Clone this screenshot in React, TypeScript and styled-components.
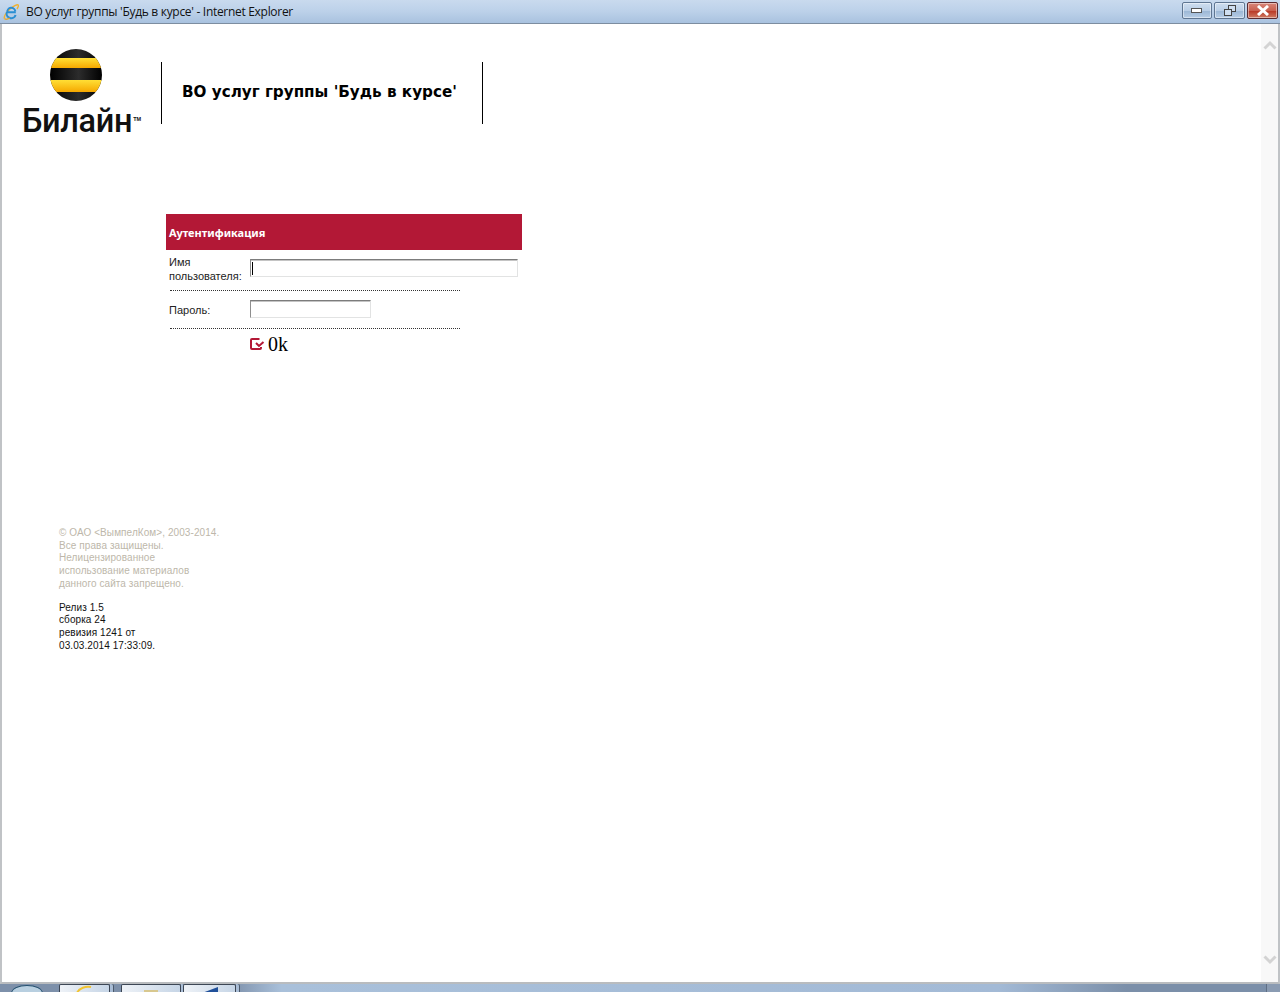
import styled, { createGlobalStyle } from 'styled-components';

const GlobalStyle = createGlobalStyle`
  html, body {
    margin: 0;
    padding: 0;
    height: 100%;
    overflow: hidden;
    background: #fff;
  }
`;

const Screen = styled.div`
  width: 1280px;
  height: 992px;
  display: flex;
  flex-direction: column;
  overflow: hidden;
`;

const TitleBar = styled.div`
  height: 23px;
  padding: 0 2px 0 3px;
  display: flex;
  align-items: center;
  flex-shrink: 0;
  background: linear-gradient(to bottom, #c9daee 0%, #bcd1e9 50%, #a9c2df 100%);
  border-bottom: 1px solid #7d8da0;
`;

const TitleText = styled.span`
  margin-left: 7px;
  padding-bottom: 1px;
  font: 12px 'Open Sans', 'Liberation Sans', sans-serif;
  letter-spacing: -0.3px;
  color: #111;
  white-space: nowrap;
  flex: 1;
`;

const WindowBtn = styled.div<{ $w: number; $close?: boolean }>`
  width: ${(p) => p.$w}px;
  height: 17px;
  margin-left: 2px;
  align-self: flex-start;
  margin-top: 2px;
  box-sizing: border-box;
  display: flex;
  align-items: center;
  justify-content: center;
  border: 1px solid ${(p) => (p.$close ? '#5b2a30' : '#5f7692')};
  border-radius: 2px;
  box-shadow: inset 0 0 0 1px rgba(255, 255, 255, 0.45);
  background: ${(p) =>
    p.$close
      ? 'linear-gradient(to bottom, #d9877a 0%, #c9604f 50%, #b93a28 55%, #cf7a62 100%)'
      : 'linear-gradient(to bottom, #cfdeef 0%, #b9cee6 50%, #9db8d6 55%, #b7cde5 100%)'};
`;

const Body = styled.div`
  flex: 1;
  display: flex;
  min-height: 0;
  border-left: 2px solid #c0c3c6;
  border-right: 2px solid #c0c3c6;
  border-bottom: 2px solid #b9bcbf;
`;

const Page = styled.div`
  flex: 1;
  display: flex;
  flex-direction: column;
  background: #fff;
  padding-top: 25px;
`;

const ScrollBar = styled.div`
  width: 17px;
  background: #f8f8f8;
  display: flex;
  flex-direction: column;
  justify-content: space-between;
  align-items: center;
  padding: 16px 0 17px;
  box-sizing: border-box;
`;

const Header = styled.div`
  display: flex;
  align-items: flex-start;
  padding-left: 20px;
  height: 165px;
`;

const LogoBox = styled.div`
  width: 120px;
  display: flex;
  flex-direction: column;
  align-items: flex-start;
`;

const LogoBall = styled.div`
  margin-left: 28px;
  height: 52px;
`;

const LogoWord = styled.div`
  font: 500 32.5px/34px 'Roboto', 'Liberation Sans', sans-serif;
  letter-spacing: -0.3px;
  color: #111;
  display: flex;
  margin-top: 3px;
  white-space: nowrap;
`;

const LogoTm = styled.span`
  font: 700 5.5px/8px 'Liberation Sans', sans-serif;
  letter-spacing: 0;
  margin-top: 11px;
  margin-left: 1px;
`;

const HeaderTitle = styled.div`
  margin: 13px 0 0 19px;
  width: 322px;
  height: 62px;
  box-sizing: border-box;
  border-left: 1px solid #000;
  border-right: 1px solid #000;
  padding: 0 0 2px 20px;
  display: flex;
  align-items: center;
  font: 700 15.2px 'DejaVu Sans', sans-serif;
  color: #000;
  white-space: nowrap;
`;

const LoginForm = styled.div`
  margin-left: 164px;
  width: 356px;
  display: flex;
  flex-direction: column;
`;

const FormCaption = styled.div`
  height: 36px;
  background: #b31836;
  color: #fff;
  display: flex;
  align-items: center;
  padding-left: 3px;
  box-sizing: border-box;
  font: 700 11px 'Noto Sans', sans-serif;
`;

const FieldRow = styled.div<{ $h: number }>`
  height: ${(p) => p.$h}px;
  display: flex;
  align-items: flex-start;
  padding-left: 3px;
`;

const FieldLabel = styled.label<{ $top: number }>`
  width: 81px;
  margin-top: ${(p) => p.$top}px;
  font: 11px/14px 'Liberation Sans', sans-serif;
  color: #222;
`;

const FieldInput = styled.input<{ $w: number }>`
  width: ${(p) => p.$w}px;
  height: 18px;
  margin: 9px 0 0;
  padding: 0 2px;
  box-sizing: border-box;
  background: #fff;
  border: 1px solid #e2e3e3;
  border-top: 1px solid #7c7c7c;
  border-left: 1px solid #8e8e8e;
  box-shadow: inset 0 1px 0 #c4c4c4;
  outline: none;
`;

const InputWrap = styled.div`
  position: relative;
  display: flex;
`;

const Caret = styled.span`
  position: absolute;
  left: 2px;
  top: 12px;
  width: 1px;
  height: 13px;
  background: #000;
`;

const Dots = styled.div`
  margin-left: 4px;
  width: 290px;
  border-top: 1px dotted #333;
`;

const OkRow = styled.div`
  display: flex;
  align-items: center;
  margin: 5px 0 0 83px;
  height: 20px;
`;

const OkLink = styled.a`
  margin-left: 3px;
  font: 20px/20px 'Liberation Serif', serif;
  color: #000;
`;

const Footer = styled.div`
  margin: 173px 0 0 57px;
  font: 10px/12.7px 'Liberation Sans', sans-serif;
  letter-spacing: 0.08px;
`;

const Copyright = styled.div`
  color: #bdb7aa;
  margin-bottom: 11px;
`;

const Release = styled.div`
  color: #111;
`;

const Taskbar = styled.div`
  height: 8px;
  flex-shrink: 0;
  display: flex;
  align-items: flex-start;
  background: linear-gradient(to right, #7d90aa 0%, #7d90aa 18%, #a9c0da 22%, #a3bad6 78%, #7b8fa9 88%, #7b8fa9 100%);
`;

const StartOrb = styled.div`
  width: 32px;
  height: 16px;
  margin-left: 11px;
  margin-top: 1px;
  box-sizing: border-box;
  border: 1px solid #24506f;
  border-radius: 50%;
  background: #b8cfe0;
`;

const TaskTab = styled.div<{ $w: number; $ml: number }>`
  width: ${(p) => p.$w}px;
  height: 8px;
  margin-left: ${(p) => p.$ml}px;
  box-sizing: border-box;
  border: 1px solid #3c4654;
  border-bottom: none;
  border-radius: 2px 2px 0 0;
  background: linear-gradient(to right, #eef2f7, #c6d5e6);
  box-shadow: 3px 0 0 #a9bdd6, 4px 0 0 #4c5a6c;
  display: flex;
  justify-content: center;
  overflow: hidden;
`;

const ShowDesktop = styled.div`
  margin-left: auto;
  width: 13px;
  height: 8px;
  background: #8a9bb2;
  border-left: 1px solid #5f6f85;
`;

const IeIcon = () => (
  <svg width="16" height="16" viewBox="0 0 16 16">
    <path d="M1.500 14.500c-1-1.500 1.500-6 5.500-9.500s7.500-5 8.300-3.800c.5.800-.3 2.300-1.300 3.800" fill="none" stroke="#efb02e" strokeWidth="1.400" />
    <path d="M12.800 8.300H4.300a4 4 0 0 1 8-.9M12.600 11a4.600 4.600 0 0 1-8.800-2.700" fill="none" stroke="#2a8ed2" strokeWidth="2" />
    <path d="M1.500 14.500c1 1.100 3.500.6 5.200-.4" fill="none" stroke="#e6a92c" strokeWidth="1.200" />
  </svg>
);

const BeelineBall = () => (
  <svg width="52" height="52" viewBox="0 0 52 52">
    <defs>
      <clipPath id="ball">
        <circle cx="26" cy="26" r="26" />
      </clipPath>
      <linearGradient id="gold" x1="0" y1="0" x2="0" y2="1">
        <stop offset="0" stopColor="#ffdf36" />
        <stop offset="1" stopColor="#f6a800" />
      </linearGradient>
      <linearGradient id="ink" x1="0" y1="0" x2="1" y2="0">
        <stop offset="0" stopColor="#000" />
        <stop offset="0.55" stopColor="#2c2c2c" />
        <stop offset="1" stopColor="#000" />
      </linearGradient>
    </defs>
    <g clipPath="url(#ball)">
      <rect width="52" height="52" fill="url(#ink)" />
      <rect y="9" width="52" height="10" fill="url(#gold)" />
      <rect y="31" width="52" height="12" fill="url(#gold)" />
    </g>
  </svg>
);

const OkIcon = () => (
  <svg width="16" height="14" viewBox="0 0 16 14">
    <path d="M10.500 2H3a1 1 0 0 0-1 1v8a1 1 0 0 0 1 1h8a1 1 0 0 0 1-1v-1" fill="none" stroke="#b31836" strokeWidth="2" />
    <path d="M7 6l3 3 4.500-4" fill="none" stroke="#b31836" strokeWidth="2" />
  </svg>
);

const App = () => {
  return (
    <Screen>
      <GlobalStyle />
      <TitleBar>
        <IeIcon />
        <TitleText>{"ВО услуг группы 'Будь в курсе' - Internet Explorer"}</TitleText>
        <WindowBtn $w={30}>
          <svg width="12" height="6" viewBox="0 0 12 6">
            <rect x="0.500" y="0.500" width="10" height="4" fill="#fff" stroke="#555" />
          </svg>
        </WindowBtn>
        <WindowBtn $w={31}>
          <svg width="12" height="12" viewBox="0 0 12 12">
            <rect x="4.500" y="0.500" width="7" height="6" fill="#cfdeef" stroke="#444" />
            <rect x="0.500" y="4.500" width="7" height="6" fill="#cfdeef" stroke="#444" />
          </svg>
        </WindowBtn>
        <WindowBtn $w={31} $close>
          <svg width="14" height="11" viewBox="0 0 14 11">
            <path d="M2 1l10 9M12 1L2 10" stroke="#fff" strokeWidth="3" />
          </svg>
        </WindowBtn>
      </TitleBar>
      <Body>
        <Page>
          <Header>
            <LogoBox>
              <LogoBall>
                <BeelineBall />
              </LogoBall>
              <LogoWord>
                Билайн<LogoTm>TM</LogoTm>
              </LogoWord>
            </LogoBox>
            <HeaderTitle>{"ВО услуг группы 'Будь в курсе'"}</HeaderTitle>
          </Header>
          <LoginForm>
            <FormCaption>Аутентификация</FormCaption>
            <FieldRow $h={40}>
              <FieldLabel $top={5}>
                Имя
                <br />
                пользователя:
              </FieldLabel>
              <InputWrap>
                <FieldInput $w={268} />
                <Caret />
              </InputWrap>
            </FieldRow>
            <Dots />
            <FieldRow $h={37}>
              <FieldLabel $top={12}>Пароль:</FieldLabel>
              <FieldInput $w={121} type="password" />
            </FieldRow>
            <Dots />
            <OkRow>
              <OkIcon />
              <OkLink>0k</OkLink>
            </OkRow>
          </LoginForm>
          <Footer>
            <Copyright>
              © ОАО &lt;ВымпелКом&gt;, 2003-2014.
              <br />
              Все права защищены.
              <br />
              Нелицензированное
              <br />
              использование материалов
              <br />
              данного сайта запрещено.
            </Copyright>
            <Release>
              Релиз 1.5
              <br />
              сборка 24
              <br />
              ревизия 1241 от
              <br />
              03.03.2014 17:33:09.
            </Release>
          </Footer>
        </Page>
        <ScrollBar>
          <svg width="14" height="10" viewBox="0 0 14 10">
            <path d="M1.500 8.500L7 3l5.500 5.500" fill="none" stroke="#d3d3d3" strokeWidth="3" />
          </svg>
          <svg width="14" height="10" viewBox="0 0 14 10">
            <path d="M1.500 1.500L7 7l5.500-5.500" fill="none" stroke="#d3d3d3" strokeWidth="3" />
          </svg>
        </ScrollBar>
      </Body>
      <Taskbar>
        <StartOrb />
        <TaskTab $w={51} $ml={16}>
          <svg width="20" height="8" viewBox="0 0 20 8">
            <path d="M2 8c2-5 9-7 14-6" fill="none" stroke="#f2c431" strokeWidth="2" />
          </svg>
        </TaskTab>
        <TaskTab $w={60} $ml={11}>
          <svg width="20" height="8" viewBox="0 0 20 8">
            <rect x="3" y="5" width="14" height="3" fill="#d8c88f" />
          </svg>
        </TaskTab>
        <TaskTab $w={53} $ml={2}>
          <svg width="20" height="8" viewBox="0 0 20 8">
            <path d="M2 8l16-6v6z" fill="#20509a" />
          </svg>
        </TaskTab>
        <ShowDesktop />
      </Taskbar>
    </Screen>
  );
};

export default App;
